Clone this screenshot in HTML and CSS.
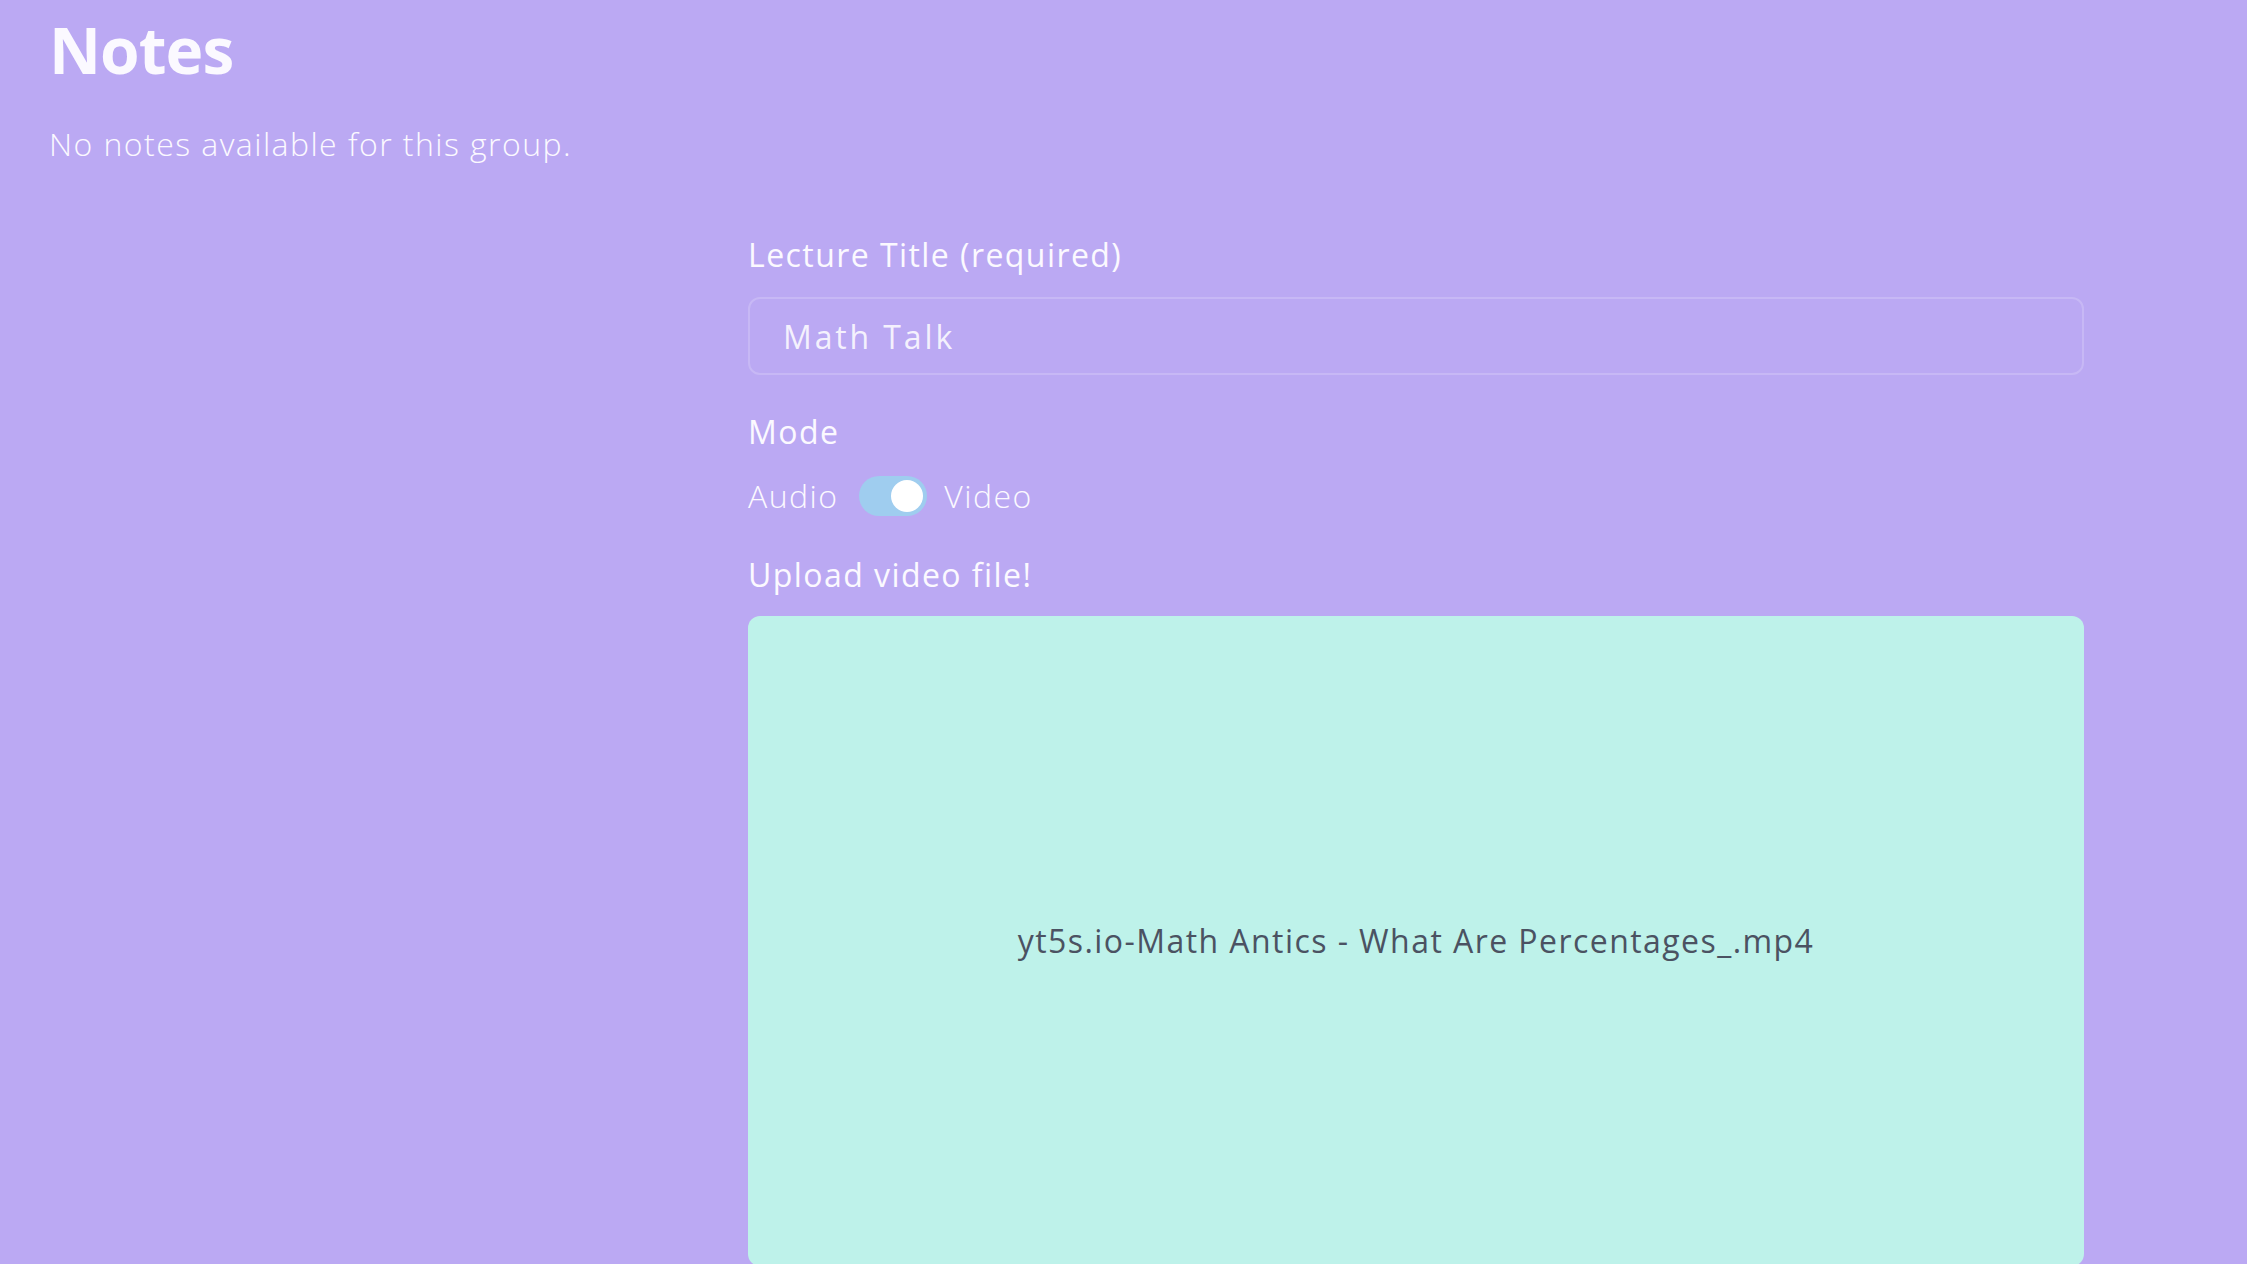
FILE: index.html
```html
<!DOCTYPE html>
<html lang="en">
<head>
<meta charset="utf-8">
<title>Notes</title>
<link rel="stylesheet" href="styles.css">
</head>
<body>
<main class="page">
  <h1 class="title">Notes</h1>
  <p class="empty">No notes available for this group.</p>
  <section class="form-wrap">
    <form class="lecture-form">
      <label class="field-label" for="title">Lecture Title (required)</label>
      <input class="text-input" id="title" type="text" value="Math Talk">
      <div class="field-label mode-label">Mode</div>
      <div class="mode-row">
        <span class="mode-text">Audio</span>
        <span class="switch"><span class="thumb"></span></span>
        <span class="mode-text">Video</span>
      </div>
      <div class="field-label upload-label">Upload video file!</div>
      <div class="dropzone">
        <span class="file-name">yt5s.io-Math Antics - What Are Percentages_.mp4</span>
      </div>
    </form>
  </section>
</main>
</body>
</html>
```

FILE: styles.css
```css
html, body {
  margin: 0;
  padding: 0;
  background: #bba9f3;
  height: 100%;
  overflow: hidden;
}
body {
  font-family: "Open Sans", "Liberation Sans", sans-serif;
  color: #fbf9ff;
  letter-spacing: 0.09em;
}
.page {
  padding: 11px 0 0 49px;
}
.title {
  margin: 0;
  font-size: 64px;
  line-height: 78px;
  font-weight: 700;
  letter-spacing: -0.015em;
}
.empty {
  margin: 35px 0 0;
  font-size: 32px;
  line-height: 40px;
  font-weight: 300;
}
.form-wrap {
  margin-top: 71px;
  padding-left: 699px;
  width: 1336px;
}
.lecture-form {
  display: flex;
  flex-direction: column;
}
.field-label {
  font-size: 32px;
  line-height: 40px;
  font-weight: 500;
  margin-bottom: 22px;
}
.text-input {
  box-sizing: border-box;
  height: 78px;
  width: 100%;
  border: 2px solid rgba(255, 255, 255, 0.18);
  border-radius: 12px;
  background: transparent;
  padding: 0 33px;
  font-family: inherit;
  font-size: 32px;
  font-weight: 400;
  letter-spacing: 0.09em;
  color: rgba(255, 255, 255, 0.85);
  outline: none;
}
.mode-label {
  margin-top: 37px;
  margin-bottom: 24px;
}
.mode-row {
  display: flex;
  align-items: center;
  gap: 17px;
  height: 40px;
}
.mode-text {
  font-size: 32px;
  line-height: 40px;
  font-weight: 300;
}
.switch {
  box-sizing: border-box;
  width: 68px;
  height: 40px;
  margin-left: 4px;
  border-radius: 20px;
  background: #9fcdef;
  display: flex;
  align-items: center;
  justify-content: flex-end;
  padding: 0 4px;
}
.thumb {
  width: 32px;
  height: 32px;
  border-radius: 50%;
  background: #ffffff;
}
.upload-label {
  margin-top: 39px;
  margin-bottom: 21px;
}
.dropzone {
  height: 650px;
  border-radius: 12px;
  background: #bef2ea;
  display: flex;
  align-items: center;
  justify-content: center;
}
.file-name {
  font-size: 32px;
  line-height: 40px;
  font-weight: 400;
  color: #4b5262;
}
```
